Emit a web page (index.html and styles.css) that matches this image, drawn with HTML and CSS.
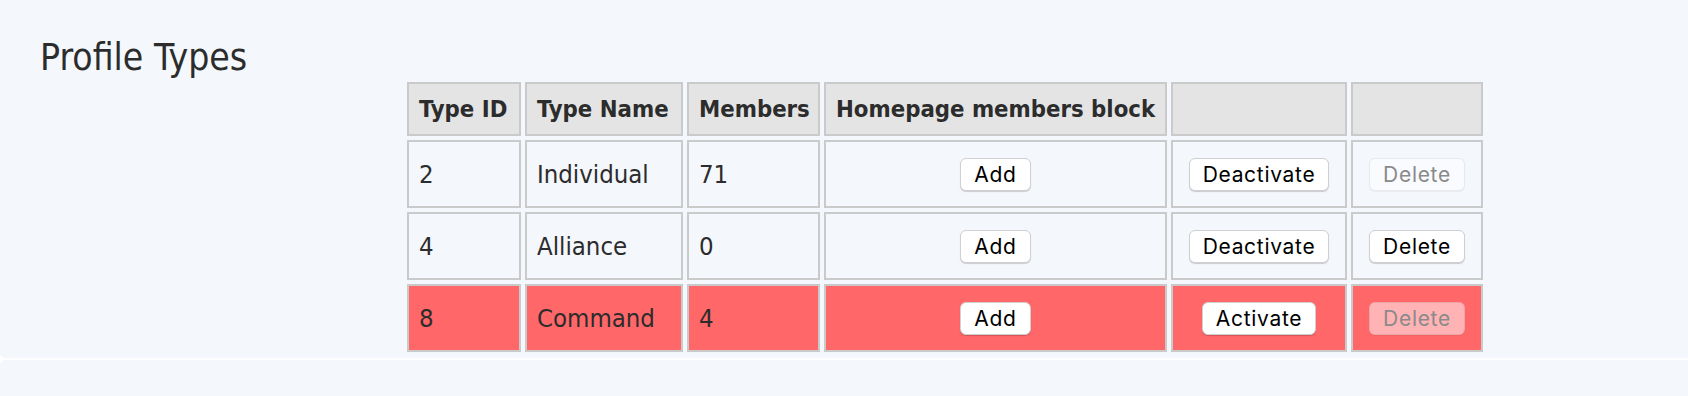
FILE: index.html
```html
<!DOCTYPE html>
<html lang="en">
<head>
<meta charset="utf-8">
<title>Profile Types</title>
<link rel="stylesheet" href="styles.css">
</head>
<body>
<div class="panel panel-main">
  <h1 class="title">Profile Types</h1>
  <table class="types">
    <thead>
      <tr>
        <th class="c-id">Type ID</th>
        <th class="c-name">Type Name</th>
        <th class="c-members">Members</th>
        <th class="c-block">Homepage members block</th>
        <th class="c-act"></th>
        <th class="c-del"></th>
      </tr>
    </thead>
    <tbody>
      <tr>
        <td>2</td>
        <td>Individual</td>
        <td>71</td>
        <td class="center"><button class="btn">Add</button></td>
        <td class="center"><button class="btn">Deactivate</button></td>
        <td class="center"><button class="btn" disabled>Delete</button></td>
      </tr>
      <tr>
        <td>4</td>
        <td>Alliance</td>
        <td>0</td>
        <td class="center"><button class="btn">Add</button></td>
        <td class="center"><button class="btn">Deactivate</button></td>
        <td class="center"><button class="btn">Delete</button></td>
      </tr>
      <tr class="inactive">
        <td>8</td>
        <td>Command</td>
        <td>4</td>
        <td class="center"><button class="btn">Add</button></td>
        <td class="center"><button class="btn">Activate</button></td>
        <td class="center"><button class="btn" disabled>Delete</button></td>
      </tr>
    </tbody>
  </table>
</div>
<div class="panel panel-next"></div>
</body>
</html>
```
FILE: styles.css
```css
html, body {
  margin: 0;
  padding: 0;
  background: #ffffff;
}

body {
  font-family: "DejaVu Sans Condensed", "DejaVu Sans", sans-serif;
  font-stretch: condensed;
  color: #2c2c2c;
}

.panel {
  background: #f4f7fc;
}

.panel-main {
  padding: 37px 0 2px 40px;
  border-bottom-left-radius: 5px;
  margin-bottom: 2px;
}

.panel-next {
  height: 36px;
  border-top-left-radius: 5px;
}

.title {
  margin: 0;
  font-size: 37px;
  line-height: 41px;
  font-weight: normal;
  color: #2c2c2c;
}

.types {
  margin-left: 363px;
  border-collapse: separate;
  border-spacing: 4px;
  table-layout: fixed;
  width: 1083px;
}

.types th,
.types td {
  box-sizing: border-box;
  border: 2px solid #cacaca;
  padding: 0 10px;
  text-align: left;
  vertical-align: middle;
  white-space: nowrap;
}

.types th {
  background: #e4e4e4;
  font-weight: bold;
  font-size: 23.7px;
  height: 54px;
}

.types td {
  font-size: 25.5px;
  height: 68px;
}

.types .c-id { width: 114px; }
.types .c-name { width: 158px; }
.types .c-members { width: 133px; }
.types .c-block { width: 343px; }
.types .c-act { width: 176px; }
.types .c-del { width: 132px; }

.types td.center {
  text-align: center;
}

.inactive td {
  background: #ff6769;
}

.btn {
  font-family: Inter, "Liberation Sans", sans-serif;
  font-size: 21px;
  letter-spacing: 0.7px;
  line-height: 31px;
  height: 33px;
  padding: 0 13px;
  margin: 0;
  color: #000000;
  background: #ffffff;
  border: 1px solid #d0d0d0;
  border-radius: 6px;
  box-shadow: 0 1px 1px rgba(0, 0, 0, 0.18);
  vertical-align: middle;
}

.btn:disabled {
  color: #8a8a8a;
  background: rgba(255, 255, 255, 0.5);
  border-color: rgba(0, 0, 0, 0.07);
  box-shadow: 0 1px 1px rgba(0, 0, 0, 0.05);
}
```
